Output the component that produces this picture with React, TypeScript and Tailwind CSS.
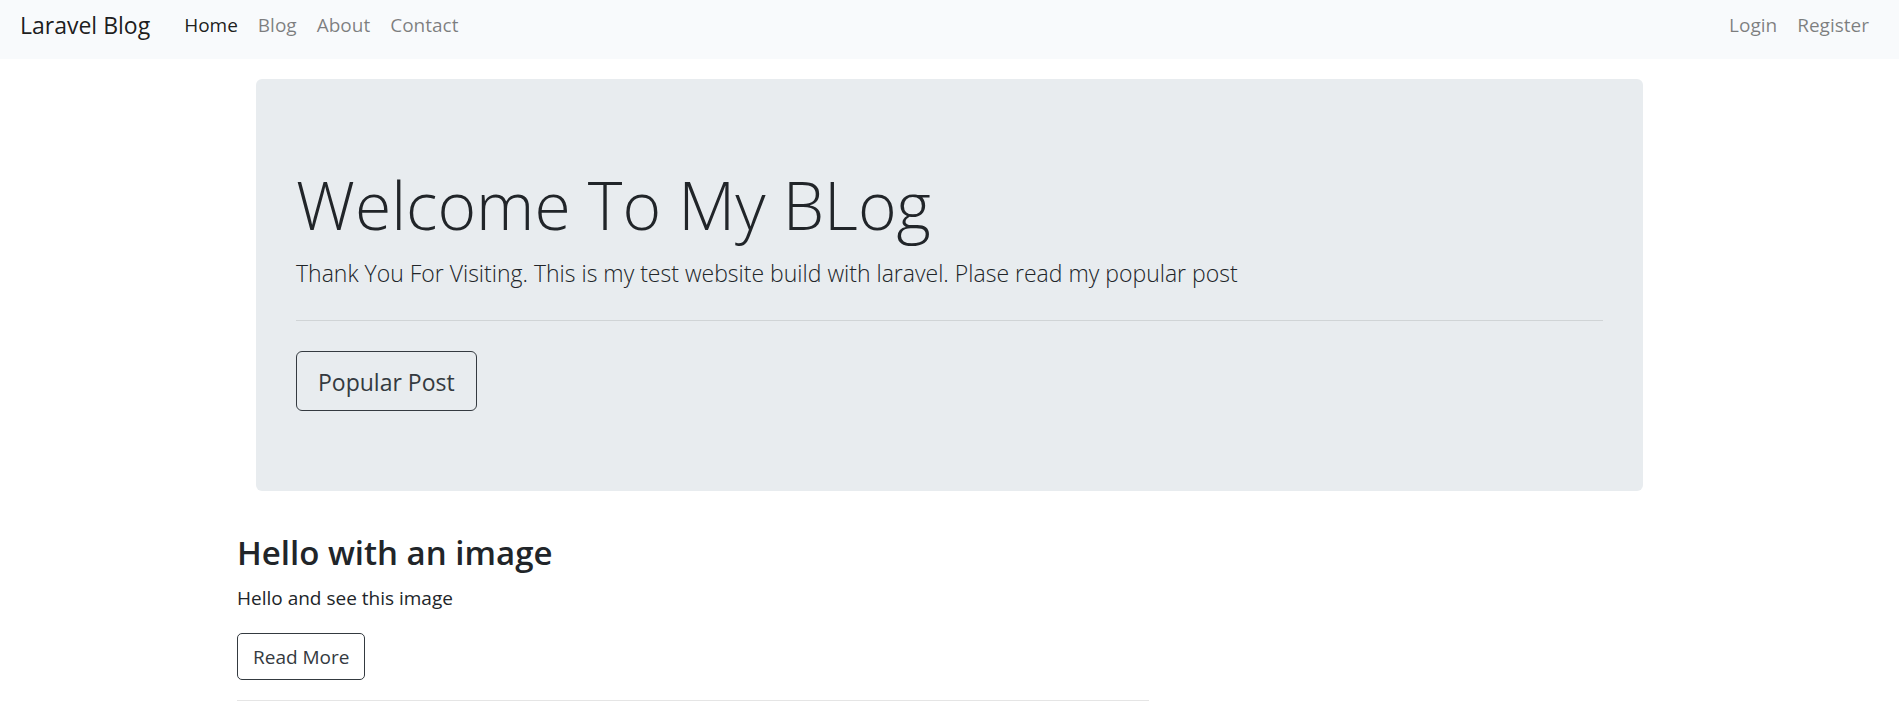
const links = ["Blog", "About", "Contact"];

export default function App() {
  return (
    <div className="min-h-screen bg-white font-['Open_Sans',sans-serif] text-[19px] leading-[30px] text-[#212529]">
      <nav className="flex h-[59px] items-start bg-[#f8fafc] px-5 pt-[10px]">
        <a href="#" className="mr-6 text-[23px] text-black/90">
          Laravel Blog
        </a>
        <ul className="flex">
          <li>
            <a href="#" aria-current="page" className="px-[10px] text-black/90">
              Home
            </a>
          </li>
          {links.map((label) => (
            <li key={label}>
              <a href="#" className="px-[10px] text-black/50">
                {label}
              </a>
            </li>
          ))}
        </ul>
        <ul className="ml-auto flex text-black/50">
          <li>
            <a href="#" className="px-[10px]">
              Login
            </a>
          </li>
          <li>
            <a href="#" className="px-[10px]">
              Register
            </a>
          </li>
        </ul>
      </nav>

      <main className="mx-auto mt-5 max-w-[1425px]">
        <section className="mx-[19px] rounded-md bg-[#e8ecef] px-10 py-20">
          <h1 className="mb-[5px] text-[66px] leading-[90px] font-light">Welcome To My BLog</h1>
          <p className="text-[23px] leading-[38px] font-light">
            Thank You For Visiting. This is my test website build with laravel. Plase read my popular post
          </p>
          <hr className="mt-7 mb-[30px] border-black/10" />
          <a
            href="#"
            className="inline-block rounded-md border border-[#343a40] px-[21px] pt-[11px] pb-[9px] text-[23px] leading-[38px] text-[#343a40]"
          >
            Popular Post
          </a>
        </section>

        <div className="mt-[39px] w-16/25">
          <article>
            <h2 className="mb-[7px] text-[33px] leading-[46px] font-semibold">Hello with an image</h2>
            <p className="mb-5">Hello and see this image</p>
            <a
              href="#"
              className="inline-block rounded-[5px] border border-[#343a40] px-[15px] pt-2 pb-[7px] text-[#343a40]"
            >
              Read More
            </a>
          </article>
          <hr className="mt-5 border-black/10" />
        </div>
      </main>
    </div>
  );
}
